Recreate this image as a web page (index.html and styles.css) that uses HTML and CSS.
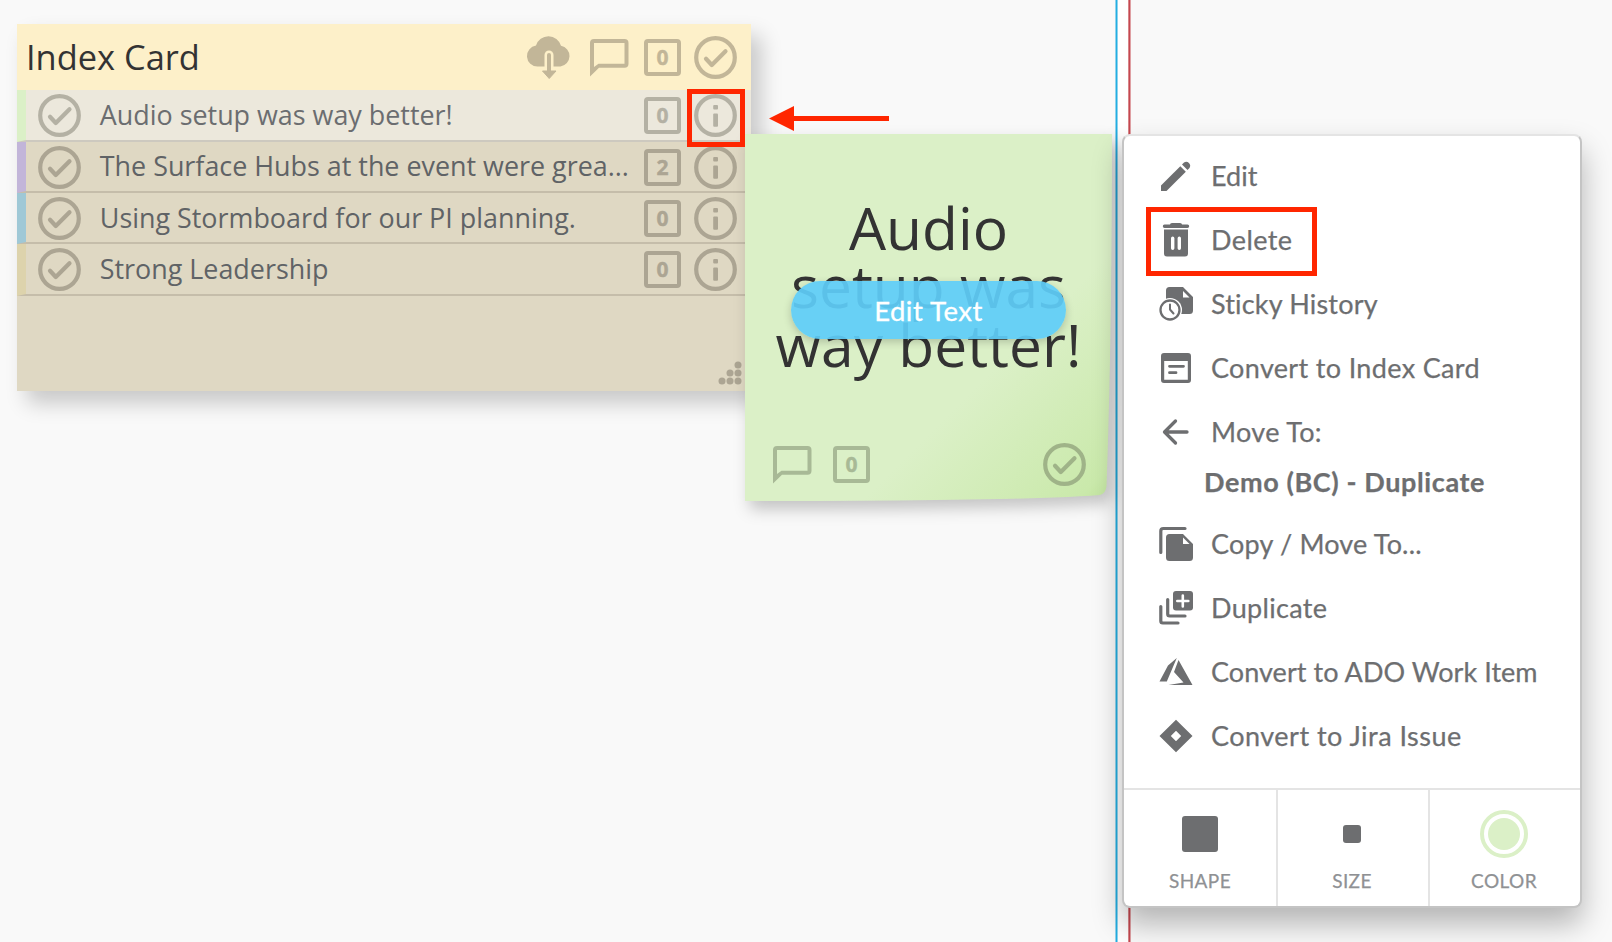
FILE: index.html
```html
<!DOCTYPE html>
<html lang="en">
<head>
<meta charset="utf-8">
<title>Storm</title>
<link rel="stylesheet" href="styles.css">
</head>
<body>
<svg class="defs" aria-hidden="true">
  <symbol id="check" viewBox="0 0 43 43"><circle cx="21.5" cy="21.5" r="19.3" fill="none" stroke="currentColor" stroke-width="4.2"/><path d="M12 22.800l5.800 6.200L31.500 15.200" fill="none" stroke="currentColor" stroke-width="4.2" stroke-linecap="round" stroke-linejoin="round"/></symbol>
  <symbol id="info" viewBox="0 0 43 43"><circle cx="21.5" cy="21.5" r="19.3" fill="none" stroke="currentColor" stroke-width="4.2"/><rect x="19.200" y="11" width="4.800" height="4.400" rx="1" fill="currentColor"/><rect x="19.200" y="19.500" width="4.800" height="13.300" rx="1" fill="currentColor"/></symbol>
  <symbol id="bubble" viewBox="0 0 40 39"><path fill-rule="evenodd" d="M1 38.500V5a4 4 0 0 1 4-4H35.500a4 4 0 0 1 4 4V25.700a4 4 0 0 1-4 4H10zM5 5V29L9.500 25.700H35.500V5z" fill="currentColor"/></symbol>
</svg>
<main class="board">
  <div class="guide"></div>

  <section class="card">
    <header class="card-head">
      <h1 class="card-title">Index Card</h1>
      <svg class="cloud" viewBox="0 0 44 44"><path d="M10.500 30.500A10.500 10.500 0 0 1 9 9.600A13 13 0 0 1 34 9.800A10.500 10.500 0 0 1 33.500 30.500z" fill="currentColor"/><path class="cloud-gap" d="M22 32V19" /><path d="M22 36V19" stroke="currentColor" stroke-width="4" stroke-linecap="round"/><path d="M15.500 35h13.500L22.200 42.500z" fill="currentColor" stroke="currentColor" stroke-linejoin="round"/></svg>
      <svg class="bubble"><use href="#bubble"/></svg>
      <span class="count">0</span>
      <svg class="round"><use href="#check"/></svg>
    </header>
    <div class="row row-active green"><svg class="round"><use href="#check"/></svg><span class="row-text">Audio setup was way better!</span><span class="count">0</span><svg class="round"><use href="#info"/></svg></div>
    <div class="row purple"><svg class="round"><use href="#check"/></svg><span class="row-text">The Surface Hubs at the event were grea...</span><span class="count">2</span><svg class="round"><use href="#info"/></svg></div>
    <div class="row blue"><svg class="round"><use href="#check"/></svg><span class="row-text">Using Stormboard for our PI planning.</span><span class="count">0</span><svg class="round"><use href="#info"/></svg></div>
    <div class="row tan"><svg class="round"><use href="#check"/></svg><span class="row-text">Strong Leadership</span><span class="count">0</span><svg class="round"><use href="#info"/></svg></div>
    <svg class="grip" viewBox="0 0 24 24" fill="currentColor"><circle cx="20" cy="4" r="3.500"/><circle cx="12" cy="12" r="3.500"/><circle cx="20" cy="12" r="3.500"/><circle cx="4" cy="20" r="3.500"/><circle cx="12" cy="20" r="3.500"/><circle cx="20" cy="20" r="3.500"/></svg>
  </section>

  <section class="sticky">
    <svg class="paper" viewBox="0 0 367 367"><defs><linearGradient id="pg" x1="0" y1="0" x2="1" y2="1"><stop offset="0" stop-color="#dbf0c7"/><stop offset=".66" stop-color="#dbf0c7"/><stop offset=".95" stop-color="#cae9ab"/><stop offset="1" stop-color="#bfe29b"/></linearGradient></defs><path d="M0 0H367Q367 200 361.500 352Q361 359 355 361Q280 367 0 367z" fill="url(#pg)"/></svg>
    <p class="sticky-text">Audio<br>setup was<br>way better!</p>
    <div class="sticky-foot"><svg class="bubble"><use href="#bubble"/></svg><span class="count">0</span><svg class="round"><use href="#check"/></svg></div>
    <button class="edit-text">Edit Text</button>
  </section>

  <nav class="menu">
    <ul class="items">
      <li class="item"><svg class="icon" viewBox="0 0 36 36"><path d="M3 27.500V33h5.500L27.800 13.700 22.300 8.200z"/><path d="M24 6.500l2-2a4 4 0 0 1 5.500 5.500l-2 2z"/></svg><span>Edit</span></li>
      <li class="item track-4"><svg class="icon" viewBox="0 0 36 36"><path d="M12 2.500Q12 1 14 1h8q2 0 2 1.500h5.500a1.700 1.700 0 0 1 0 3.400H6.500a1.700 1.700 0 0 1 0-3.400z"/><path fill-rule="evenodd" d="M6 7.500h24v24a3 3 0 0 1-3 3H9a3 3 0 0 1-3-3zM14.700 14.500a1.700 1.700 0 0 0-1.700 1.700v10a1.700 1.700 0 0 0 3.400 0v-10a1.700 1.700 0 0 0-1.700-1.700zM21.300 14.500a1.700 1.700 0 0 0-1.700 1.700v10a1.700 1.700 0 0 0 3.400 0v-10a1.700 1.700 0 0 0-1.700-1.700z"/></svg><span>Delete</span></li>
      <li class="item track-2"><svg class="icon" viewBox="0 0 36 36"><path d="M8 4.500a3.500 3.500 0 0 1 3.500-3.500H25L35 11v13.500a3.500 3.500 0 0 1-3.500 3.500H8z"/><path class="knock" d="M25 5v6.500h6.500z"/><circle class="knock" cx="12" cy="24" r="12"/><circle class="line" cx="12" cy="24" r="9.500" stroke-width="2.300"/><path class="line" d="M12 18.500v5l3.500 4" stroke-width="2"/></svg><span>Sticky History</span></li>
      <li class="item track-3"><svg class="icon" viewBox="0 0 36 36"><path fill-rule="evenodd" d="M6 3h24a3 3 0 0 1 3 3v24a3 3 0 0 1-3 3H6a3 3 0 0 1-3-3V6a3 3 0 0 1 3-3zM6.200 11v18.700h23.600V11z"/><path class="line" d="M11.500 16.300h14M11.500 22.700h6.500" stroke-width="2.800"/></svg><span>Convert to Index Card</span></li>
      <li class="item track-3"><svg class="icon" viewBox="0 0 36 36"><path class="line" d="M29 18H7M17.500 7L6.500 18l11 11" stroke-width="3.300"/></svg><span>Move To:</span></li>
      <li class="item item-sub"><b>Demo (BC) - Duplicate</b></li>
      <li class="item track-2"><svg class="icon" viewBox="0 0 36 36"><path d="M11.500 8H25L35 18v13.500a3.500 3.500 0 0 1-3.500 3.500h-20A3.500 3.500 0 0 1 8 31.500v-20A3.500 3.500 0 0 1 11.500 8z"/><path class="knock" d="M25 11.500v6.500h6.500z"/><path class="line" d="M2.800 26.500V5a2.500 2.500 0 0 1 2.500-2.500H27" stroke-width="3.200"/></svg><span>Copy / Move To...</span></li>
      <li class="item track-3"><svg class="icon" viewBox="0 0 36 36"><path d="M18 1h14a3 3 0 0 1 3 3v13.500a3 3 0 0 1-3 3H18a3 3 0 0 1-3-3V4a3 3 0 0 1 3-3z"/><path d="M24.800 5.500v11M19.300 11h11" stroke="#fff" stroke-width="2.600" stroke-linecap="round"/><path class="line" d="M9.700 9.500V24a2 2 0 0 0 2 2H27M2.800 16.500V31a2 2 0 0 0 2 2H20" stroke-width="3.200"/></svg><span>Duplicate</span></li>
      <li class="item track-1"><svg class="icon" viewBox="0 0 36 36"><path d="M18.800 4L10 11.500 1.500 27.500h7.300zM20.500 6L34.500 31H10.500l15-2.500L16 18z"/></svg><span>Convert to ADO Work Item</span></li>
      <li class="item track-5"><svg class="icon" viewBox="0 0 36 36"><path fill-rule="evenodd" d="M18 1.800L34.500 18 18 34.200 1.500 18zM18 12.800L12.800 18l5.200 5.200 5.200-5.200z"/></svg><span>Convert to Jira Issue</span></li>
    </ul>
    <div class="tiles">
      <div class="tile"><span class="swatch"><i class="shape-lg"></i></span><span class="label">SHAPE</span></div>
      <div class="tile"><span class="swatch"><i class="shape-sm"></i></span><span class="label">SIZE</span></div>
      <div class="tile"><span class="swatch"><i class="color-dot"></i></span><span class="label">COLOR</span></div>
    </div>
  </nav>

  <div class="mark mark-info"></div>
  <div class="mark mark-delete"></div>
  <svg class="arrow" viewBox="0 0 120 26"><path d="M0 12.500L25 0v10h95v5H25v10z" fill="#ff2600"/></svg>
</main>
</body>
</html>
```
FILE: styles.css
```css
* { box-sizing: border-box; }
body { margin: 0; }
.defs { position: absolute; width: 0; height: 0; }
svg { display: block; flex: none; overflow: visible; }

.board { position: relative; width: 1612px; height: 942px; overflow: hidden; background: #f9f9f9; font-family: "Open Sans", sans-serif; }
.guide { position: absolute; left: 1115px; top: 0; width: 16px; height: 942px; background: linear-gradient(90deg, #8fd3ec 1px, #22aee3 1px 2px, #8fd3ec 2px 3px, #fff 3px 13px, #d88589 13px 14px, #c5474f 14px 15px, #dfa0a3 15px); }

.round { width: 43px; height: 43px; }
.bubble { width: 40px; height: 39px; }
.count { flex: none; width: 37px; height: 37px; border: 4px solid #aca593; border-radius: 4px; color: #aca593; font: 700 21px/29px "Open Sans", sans-serif; text-align: center; -webkit-text-stroke: .4px; }

/* index card */
.card { position: absolute; left: 17px; top: 24px; width: 734px; height: 367px; background: #dfd8c3; color: #aca593; box-shadow: 10px 12px 20px rgba(0, 0, 0, .2); }
.card-head { display: flex; align-items: center; height: 66px; padding: 0 14px 0 9px; background: #fdf0c9; color: #c2b698; }
.card-title { flex: 1; margin: 0; color: #333; font-size: 34.4px; font-weight: 400; line-height: 66px; white-space: nowrap; }
.cloud { width: 44px; height: 44px; margin: 1px 18px 0 0; }
.cloud-gap { stroke: #fdf0c9; stroke-width: 9; stroke-linecap: round; }
.card-head .bubble { margin-right: 15px; }
.card-head .count { border-color: #c2b698; color: #c2b698; margin-right: 13px; }
.row { display: flex; align-items: center; height: 51.25px; padding: 2px 14px 0 11.5px; border-left: 9px solid; border-bottom: 2px solid #c5bdaa; }
.row-active { height: 51.75px; background: #ece8dc; color: #b4b1a4; border-bottom-color: #cdc9bf; }
.row-active .count { border-color: #b4b1a4; color: #b4b1a4; }
.row-text { flex: 1; margin-left: 19.3px; padding-bottom: 3px; color: #606366; font-size: 26.88px; white-space: nowrap; }
.row-active .row-text { color: #6b6d70; }
.row .count { margin-right: 13px; }
.green { border-left-color: #dbf0c7; }
.purple { border-left-color: #c2b5d9; }
.blue { border-left-color: #9fc8d6; }
.tan { border-left-color: #ddd3ac; }
.grip { width: 24px; height: 24px; margin: 65px 9px 0 auto; }

/* sticky note */
.sticky { position: absolute; left: 745px; top: 134px; width: 367px; height: 367px; }
.paper { position: absolute; inset: 0; width: 367px; height: 367px; filter: drop-shadow(5px 8px 8px rgba(0, 0, 0, .22)); }
.sticky-text { position: relative; margin: 0; padding-top: 64px; color: #333; font-size: 58.7px; line-height: 58.4px; text-align: center; white-space: nowrap; }
.sticky-foot { position: relative; display: flex; align-items: center; margin: 70px 26px 0 27px; color: #a8b996; }
.sticky-foot .count { margin-left: 21px; border-color: #a8b996; color: #a8b996; }
.sticky-foot .round { margin-left: auto; color: #9fb388; }
.edit-text { position: absolute; left: 46px; top: 147px; width: 275px; height: 58px; padding: 0; border: 0; border-radius: 29px; background: rgba(94, 205, 248, .92); color: #fff; font: 400 27.5px/57px Lato, sans-serif; letter-spacing: .5px; -webkit-text-stroke: .3px #fff; box-shadow: 0 3px 8px rgba(0, 0, 0, .2); }

/* context menu */
.menu { position: absolute; left: 1122px; top: 134px; width: 460px; height: 774px; display: flex; flex-direction: column; background: #fff; border: 2px solid #c4c4c4; border-top-color: #e4e4e4; border-radius: 8px; color: #6d6e70; font-family: Lato, sans-serif; box-shadow: 0 16px 30px rgba(0, 0, 0, .28); }
.items { flex: 1; margin: 0; padding: 8px 0 0 34px; list-style: none; }
.item { display: flex; align-items: center; height: 64px; font-size: 27px; white-space: nowrap; -webkit-text-stroke: .25px #6d6e70; }
.item span { margin-left: 17px; padding-bottom: 1px; }
.track-1 { letter-spacing: .05px; }
.track-2 { letter-spacing: .18px; }
.track-3 { letter-spacing: .34px; }
.track-4 { letter-spacing: .4px; }
.track-5 { letter-spacing: .48px; }
.icon { width: 36px; height: 36px; fill: currentColor; -webkit-text-stroke: 0; }
.icon .line { fill: none; stroke: currentColor; stroke-linecap: round; stroke-linejoin: round; }
.icon .knock { fill: #fff; }
.item-sub { height: 48px; padding: 0 0 13px 46px; letter-spacing: .6px; }
.tiles { display: flex; height: 118px; border-top: 2px solid #e4e4e4; }
.tile { width: 152px; display: flex; flex-direction: column; align-items: center; padding-top: 20px; }
.tile + .tile { padding-right: 2px; border-left: 2px solid #e4e4e4; }
.swatch { display: grid; place-items: center; height: 48px; }
.shape-lg { width: 36px; height: 36px; border-radius: 3px; background: #6d6e70; }
.shape-sm { width: 18px; height: 18px; border-radius: 3px; background: #6d6e70; }
.color-dot { width: 48px; height: 48px; border: 4px solid #dbf0c7; border-radius: 50%; padding: 4px; background: #dbf0c7 content-box; }
.label { margin-top: 10px; color: #8f9194; font-size: 19px; line-height: 26px; letter-spacing: .4px; -webkit-text-stroke: .25px #8f9194; }

/* annotations */
.mark { position: absolute; border: 5px solid #ff2600; }
.mark-info { left: 687px; top: 89px; width: 58px; height: 58px; }
.mark-delete { left: 1146px; top: 207px; width: 171px; height: 69px; }
.arrow { position: absolute; left: 769px; top: 106px; width: 120px; height: 26px; }
```
